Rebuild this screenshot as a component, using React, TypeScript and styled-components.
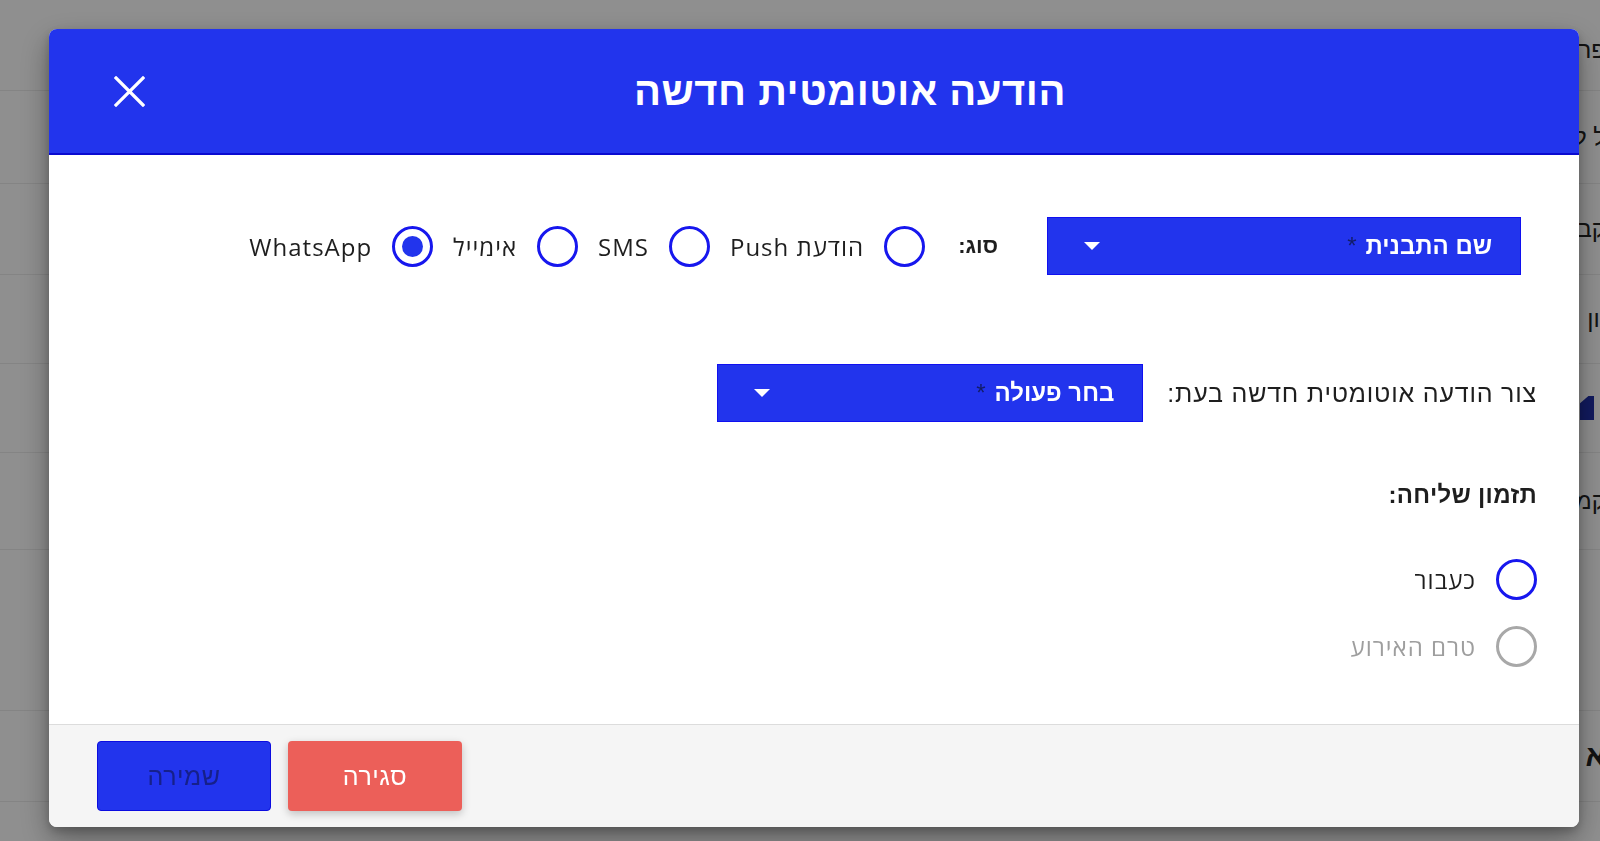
import React from "react";
import styled, { createGlobalStyle } from "styled-components";

const Global = createGlobalStyle`
  html, body { margin: 0; padding: 0; height: 100%; overflow: hidden; }
  body { font-family: "Open Sans", "Liberation Sans", "DejaVu Sans", sans-serif; background: #fff; }
  #root { width: 100vw; height: 100vh; }
`;

const BLUE = "#2234ed";

const Page = styled.div`
  direction: rtl;
  width: 100%;
  height: 100%;
  background: #ffffff;
  display: flex;
  flex-direction: column;
  padding-top: 10px;
  box-sizing: border-box;
  overflow: hidden;
`;

const PageRow = styled.div<{ $h: number; $bold?: boolean }>`
  height: ${(p) => p.$h}px;
  display: flex;
  align-items: center;
  border-bottom: 1px solid #ececec;
  margin-right: -6px;
  font-family: "Liberation Sans", sans-serif;
  font-size: ${(p) => (p.$bold ? 30 : 24)}px;
  font-weight: ${(p) => (p.$bold ? 700 : 400)};
  color: #222;
  white-space: nowrap;
`;

const PageIcon = styled.span`
  display: inline-block;
  width: 14px;
  height: 24px;
  margin-right: 12px;
  background: #1f2fa8;
  clip-path: polygon(0 30%, 60% 0, 100% 0, 100% 100%, 0 100%);
`;

const Backdrop = styled.div`
  position: fixed;
  inset: 0;
  background: rgba(0, 0, 0, 0.44);
  display: flex;
  align-items: flex-start;
  padding: 29px 0 0 49px;
  box-sizing: border-box;
`;

const Modal = styled.div`
  direction: rtl;
  width: 1530px;
  height: 798px;
  background: #fff;
  border-radius: 8px;
  overflow: hidden;
  display: flex;
  flex-direction: column;
  box-shadow: 0 12px 30px rgba(0, 0, 0, 0.35), 0 4px 10px rgba(0, 0, 0, 0.2);
`;

const Header = styled.div`
  height: 124px;
  flex: none;
  background: ${BLUE};
  border-bottom: 2px solid #0a0ad0;
  display: flex;
  align-items: center;
  padding: 0 24px 0 65px;
`;

const Title = styled.h1`
  flex: 1;
  margin: 0;
  text-align: center;
  color: #fff;
  font-family: "Liberation Sans", "DejaVu Sans", sans-serif;
  font-weight: 700;
  font-size: 40px;
  letter-spacing: 0.5px;
`;

const CloseBtn = styled.button`
  width: 31px;
  height: 31px;
  padding: 0;
  border: none;
  background: transparent;
  display: flex;
  cursor: pointer;
`;

const Body = styled.div`
  flex: 1;
  padding: 62px 42px 0 42px;
  display: flex;
  flex-direction: column;
`;

const Row = styled.div<{ $mr?: number; $mt?: number }>`
  display: flex;
  align-items: center;
  gap: 24px;
  margin-right: ${(p) => p.$mr ?? 0}px;
  margin-top: ${(p) => p.$mt ?? 0}px;
`;

const Select = styled.div<{ $w: number }>`
  width: ${(p) => p.$w}px;
  height: 58px;
  box-sizing: border-box;
  background: ${BLUE};
  border: 1px solid #1010f0;
  display: flex;
  align-items: center;
  justify-content: space-between;
  padding: 0 28px 0 36px;
  color: #fff;
  font-family: "Liberation Sans", "DejaVu Sans", sans-serif;
  font-size: 24px;
  font-weight: 700;
`;

const Req = styled.span`
  color: #121c66;
  font-weight: 400;
  font-size: 24px;
  margin-right: 9px;
`;

const Caret = styled.span`
  width: 0;
  height: 0;
  border-left: 8px solid transparent;
  border-right: 8px solid transparent;
  border-top: 8px solid #fff;
`;

const Label = styled.span<{ $bold?: boolean }>`
  font-family: "Liberation Sans", "DejaVu Sans", sans-serif;
  font-size: ${(p) => (p.$bold ? 24 : 25)}px;
  letter-spacing: ${(p) => (p.$bold ? 0.3 : 0.8)}px;
  font-weight: ${(p) => (p.$bold ? 700 : 400)};
  color: #1e1e1e;
  white-space: nowrap;
`;

const TypeLabel = styled.span`
  font-family: "Liberation Sans", "DejaVu Sans", sans-serif;
  font-size: 22px;
  font-weight: 700;
  color: #1e1e1e;
  margin: 0 25px 0 9px;
`;

const RadioGroup = styled.div<{ $column?: boolean }>`
  display: flex;
  flex-direction: ${(p) => (p.$column ? "column" : "row")};
  align-items: ${(p) => (p.$column ? "flex-start" : "center")};
  gap: ${(p) => (p.$column ? "26px" : "20px")};
`;

const RadioItem = styled.label`
  display: flex;
  align-items: center;
  gap: 20px;
`;

const Circle = styled.span<{ $checked?: boolean; $disabled?: boolean }>`
  width: 41px;
  height: 41px;
  box-sizing: border-box;
  border-radius: 50%;
  border: 3px solid ${(p) => (p.$disabled ? "#a8a8a8" : "#1717ee")};
  display: flex;
  align-items: center;
  justify-content: center;
  &::after {
    content: "";
    width: 21px;
    height: 21px;
    border-radius: 50%;
    background: ${BLUE};
    display: ${(p) => (p.$checked ? "block" : "none")};
  }
`;

const RadioText = styled.span<{ $disabled?: boolean }>`
  font-family: "Open Sans", "Liberation Sans", "DejaVu Sans", sans-serif;
  font-size: 24px;
  letter-spacing: 1px;
  color: ${(p) => (p.$disabled ? "#9e9e9e" : "#1e1e1e")};
  white-space: nowrap;
`;

const Footer = styled.div`
  height: 102px;
  flex: none;
  background: #f5f5f5;
  border-top: 1px solid #dcdcdc;
  display: flex;
  align-items: center;
  justify-content: flex-end;
  gap: 17px;
  padding: 0 0 0 48px;
`;

const Button = styled.button<{ $variant: "primary" | "danger" }>`
  width: 174px;
  height: 70px;
  border-radius: 4px;
  font-family: "Liberation Sans", "DejaVu Sans", sans-serif;
  font-size: 25px;
  letter-spacing: 0.5px;
  cursor: pointer;
  background: ${(p) => (p.$variant === "primary" ? BLUE : "#ec5f59")};
  color: ${(p) => (p.$variant === "primary" ? "#16208a" : "#fff")};
  border: ${(p) => (p.$variant === "primary" ? "1px solid #0c0ce0" : "none")};
  box-shadow: ${(p) =>
    p.$variant === "danger" ? "0 3px 8px rgba(0,0,0,0.22)" : "none"};
`;

function Radio({ label, checked, disabled }: { label: string; checked?: boolean; disabled?: boolean }) {
  return (
    <RadioItem>
      <Circle $checked={checked} $disabled={disabled} />
      <RadioText $disabled={disabled}>{label}</RadioText>
    </RadioItem>
  );
}

export default function App() {
  return (
    <>
      <Global />
      <Page>
        <PageRow $h={80}>פרטים</PageRow>
        <PageRow $h={92}>ל לקוח</PageRow>
        <PageRow $h={90}>קבוצה</PageRow>
        <PageRow $h={88}>יון</PageRow>
        <PageRow $h={88}><PageIcon /></PageRow>
        <PageRow $h={96}>קמפיין</PageRow>
        <PageRow $h={160} />
        <PageRow $h={90} $bold>א</PageRow>
      </Page>
      <Backdrop>
        <Modal>
          <Header>
            <Title>הודעה אוטומטית חדשה</Title>
            <CloseBtn aria-label="close">
              <svg width="31" height="31" viewBox="0 0 31 31">
                <path d="M2 2 L29 29 M29 2 L2 29" stroke="#fff" strokeWidth="3.2" strokeLinecap="square" />
              </svg>
            </CloseBtn>
          </Header>
          <Body>
            <Row $mr={16}>
              <Select $w={474}>
                <span>
                  שם התבנית<Req>*</Req>
                </span>
                <Caret />
              </Select>
              <TypeLabel>סוג:</TypeLabel>
              <RadioGroup>
                <Radio label="הודעת Push" />
                <Radio label="SMS" />
                <Radio label="אימייל" />
                <Radio label="WhatsApp" checked />
              </RadioGroup>
            </Row>
            <Row $mt={89}>
              <Label>צור הודעה אוטומטית חדשה בעת:</Label>
              <Select $w={426}>
                <span>
                  בחר פעולה<Req>*</Req>
                </span>
                <Caret />
              </Select>
            </Row>
            <Row $mt={59}>
              <Label $bold>תזמון שליחה:</Label>
            </Row>
            <Row $mt={50}>
              <RadioGroup $column>
                <Radio label="כעבור" />
                <Radio label="טרם האירוע" disabled />
              </RadioGroup>
            </Row>
          </Body>
          <Footer>
            <Button $variant="danger">סגירה</Button>
            <Button $variant="primary">שמירה</Button>
          </Footer>
        </Modal>
      </Backdrop>
    </>
  );
}
